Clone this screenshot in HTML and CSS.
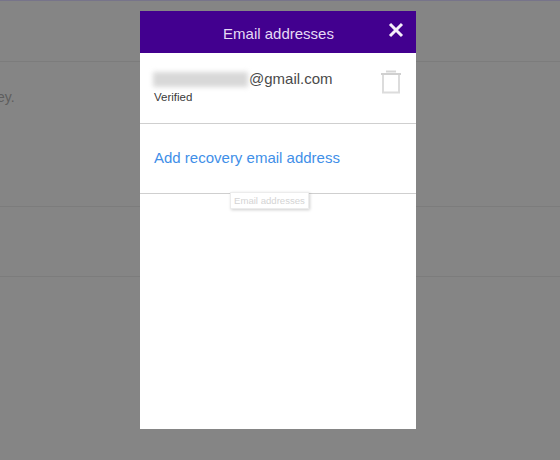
FILE: index.html
```html
<!DOCTYPE html>
<html lang="en">
<head>
    <meta charset="UTF-8">
    <title>Email addresses</title>
    <link rel="stylesheet" href="styles.css">
</head>
<body>

    <!-- Page behind the dialog, dimmed -->
    <div class="page">
        <div class="section section-top"></div>
        <div class="section section-key"><p>ey.</p></div>
        <div class="section section-mid"></div>
        <div class="section section-end"></div>
    </div>

    <div class="modal">
        <header class="modal-header">
            <h1>Email addresses</h1>
            <svg class="close-icon" viewBox="0 0 16 16" width="16" height="16">
                <path d="M2 2 L14 14 M14 2 L2 14" stroke="#f4eefa" stroke-width="3" fill="none"/>
            </svg>
        </header>

        <div class="email-row">
            <div>
                <div class="email"><span class="blurred"></span>@gmail.com</div>
                <div class="status">Verified</div>
            </div>
            <svg class="trash-icon" viewBox="0 0 22 24" width="22" height="24">
                <path d="M6 1.5 H16" stroke="#d6d6d6" stroke-width="2" fill="none"/>
                <path d="M1 4 H21" stroke="#d0d0d0" stroke-width="2" fill="none"/>
                <path d="M3 5 V22.5 H19 V5" stroke="#dcdcdc" stroke-width="2" fill="none"/>
            </svg>
        </div>

        <div class="add-row">
            <a href="#">Add recovery email address</a>
        </div>

        <div class="tooltip">Email addresses</div>
    </div>

</body>
</html>
```

FILE: styles.css
```css
html, body {
    margin: 0;
    padding: 0;
    height: 100%;
}

body {
    font-family: "Liberation Sans", Arial, sans-serif;
    background-color: #858585;
    overflow: hidden;
}

.page {
    border-top: 1px solid #77748a;
}

.section {
    border-bottom: 1px solid #7c7c7c;
}

.section-top {
    height: 60px;
}

.section-key {
    height: 144px;
    color: #5e5e5e;
    font-size: 14px;
    overflow: hidden;
}

.section-key p {
    margin: 0 0 0 -3px;
    padding-top: 27px;
}

.section-mid {
    height: 69px;
}

.section-end {
    height: 60px;
    border-bottom: none;
}

.modal {
    position: absolute;
    top: 11px;
    left: 140px;
    width: 276px;
    height: 418px;
    background-color: #fff;
}

.modal-header {
    height: 42px;
    background-color: #42008f;
    display: flex;
    align-items: center;
    justify-content: center;
    position: relative;
}

.modal-header h1 {
    margin: 2px 0 0 1px;
    font-size: 15px;
    font-weight: normal;
    color: #e6daf5;
}

.close-icon {
    position: absolute;
    right: 12px;
    top: 11px;
}

.email-row {
    height: 71px;
    box-sizing: border-box;
    border-bottom: 1px solid #cfcfcf;
    padding: 17px 14px 0;
    display: flex;
    justify-content: space-between;
    align-items: flex-start;
}

.email {
    display: flex;
    align-items: center;
    font-size: 15px;
    line-height: 18px;
    color: #4a4a4a;
}

.blurred {
    width: 95px;
    height: 15px;
    margin-left: -1px;
    margin-right: 1px;
    background-color: #d8d8d8;
    filter: blur(2.5px);
}

.status {
    font-size: 11.5px;
    line-height: 14px;
    margin-top: 2px;
    color: #3a3a3a;
}

.add-row {
    height: 70px;
    box-sizing: border-box;
    border-bottom: 1px solid #cfcfcf;
    padding-top: 25px;
    padding-left: 14px;
    font-size: 15px;
    line-height: 18px;
}

.add-row a {
    color: #3f8fe8;
    text-decoration: none;
}

.tooltip {
    position: absolute;
    top: 181px;
    left: 90px;
    padding: 2px 3px;
    font-size: 9.6px;
    color: #d4d4d4;
    background-color: #fff;
    border: 1px solid #ececec;
    box-shadow: 1px 1px 3px rgba(0, 0, 0, 0.2);
}
```
